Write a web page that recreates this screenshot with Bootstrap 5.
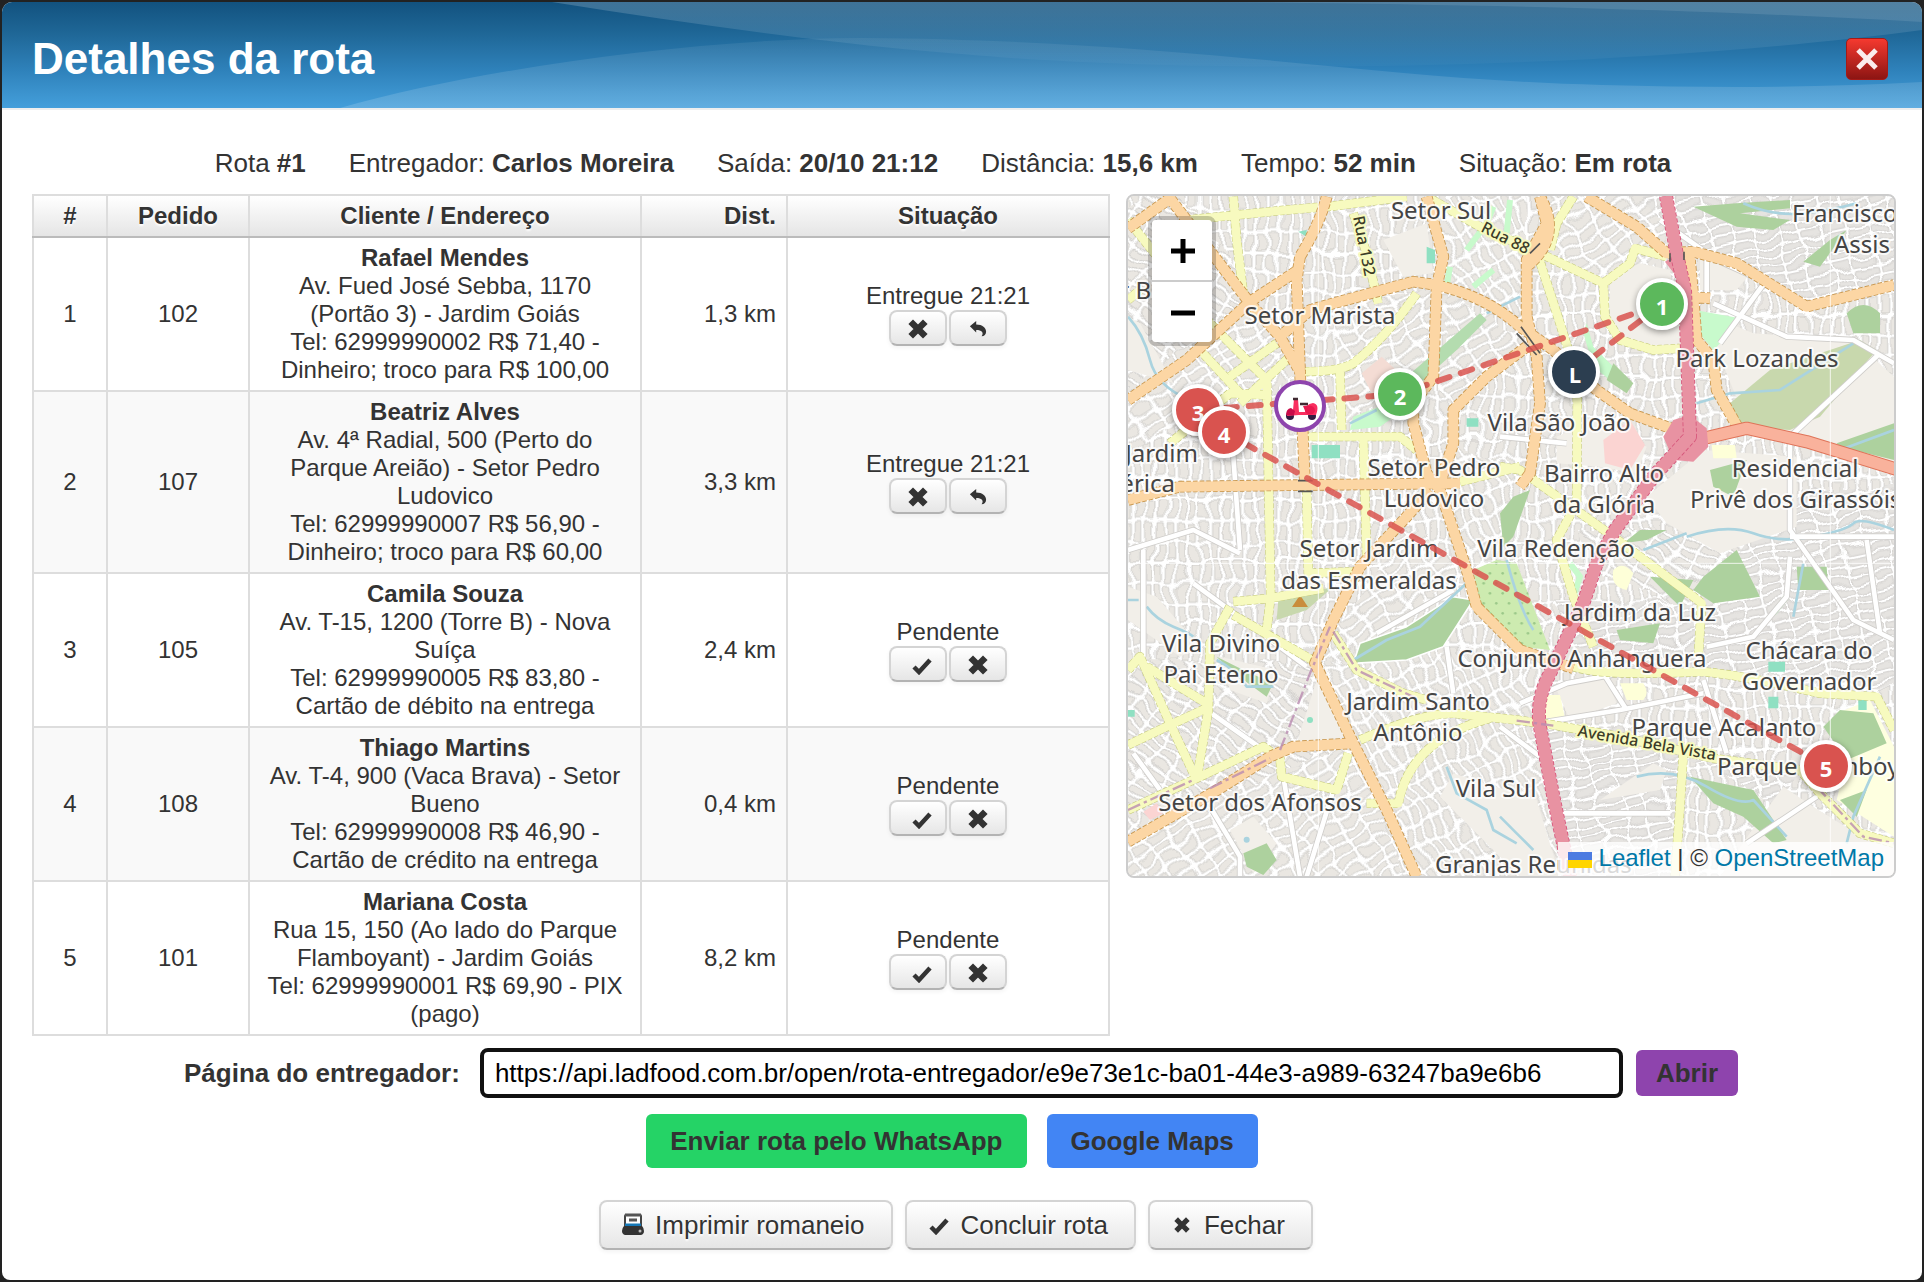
<!DOCTYPE html>
<html lang="pt-BR">
<head>
<meta charset="utf-8">
<meta name="viewport" content="width=device-width, initial-scale=1">
<title>Detalhes da rota</title>
<link href="https://cdn.jsdelivr.net/npm/bootstrap@5.3.0/dist/css/bootstrap.min.css" rel="stylesheet">
<script src="https://cdn.jsdelivr.net/npm/bootstrap@5.3.0/dist/js/bootstrap.bundle.min.js"></script>
<style>
body{background:#222;color:#333;font-family:"Liberation Sans",Arial,sans-serif;font-size:26px;line-height:30px}
.dialog-box{margin:2px;min-height:calc(100vh - 4px);background:#fff;border-radius:10px 10px 8px 8px;overflow:hidden}
.dialog-head{height:108px;padding:8px 34px 0 30px;border-bottom:2px solid #eee;background:linear-gradient(#12527f,#1f6797 30%,#2f82bb 65%,#449fdb)}
.dialog-head h1{font-size:44px;line-height:52px;font-weight:700;color:#fff}
.swoosh{position:absolute;inset:0;width:100%;height:100%}
.close-x{width:42px;height:42px;border:1px solid #a41a17;border-radius:5px;background:linear-gradient(#f5392f,#8c1513)}
.dialog-main{padding:38px 26px 30px 30px}
.info-line{gap:43px;padding-right:42px;margin-bottom:16px}
.split{display:grid;grid-template-columns:7fr 5fr;gap:16px}
.route-table{table-layout:fixed;border-collapse:collapse;font-size:24px;line-height:28px;color:#333;text-align:center}
.route-table>:not(caption)>*>*{padding:6px 10px;border:2px solid #ddd;vertical-align:middle;color:#333;box-shadow:none;background:transparent}
.route-table>thead>tr>th{background:linear-gradient(#fff,#e5e5e5);border-bottom-color:#bbb;text-shadow:0 2px 2px #fff}
.route-table>tbody>tr:nth-child(even){background:#f9f9f9}
.c-num{width:74px}.c-ord{width:142px}.c-dist{width:146px}.c-sit{width:322px}
.soft-btn{border:2px solid #d4d4d4;border-bottom-color:#b3b3b3;border-radius:8px;background:linear-gradient(#fff,#e6e6e6);color:#333;box-shadow:0 2px 4px #0000000d;text-shadow:0 2px 2px #fff}
.soft-btn:hover{background:#e6e6e6}
.pair{gap:2px}
.icon-btn{width:58px;height:36px;padding:0}
.big-btn{height:50px;font-size:26px;line-height:30px;padding:0 26px 0 20px;gap:10px}
.map-box{height:684px;border:2px solid #ccc;border-radius:8px;background:#f2efe9}
.zoom-ctl{top:20px;left:20px;border:4px solid #0003;border-radius:8px;background-clip:padding-box}
.zoom-ctl button{width:60px;height:60px;border:0;background:#fff;padding:0 0 2px 2px}
.zoom-ctl button:first-child{height:62px;border-bottom:2px solid #ccc;border-radius:4px 4px 0 0}
.zoom-ctl button:last-child{border-radius:0 0 4px 4px}
.attrib{right:0;bottom:0;height:34px;padding:0 10px;background:#fffc;font-size:24px;line-height:32px;color:#333}
.attrib a{color:#0078a8;text-decoration:none}
.place{font-family:"Noto Sans","Open Sans",sans-serif;font-size:24px;fill:#444;stroke:#fffc;stroke-width:4px;paint-order:stroke;stroke-linejoin:round;text-anchor:middle}
.at-start{text-anchor:start}.at-end{text-anchor:end}
.street{font-size:16px;font-weight:500;text-anchor:start;fill:#3c3c28;stroke:#f7fabf}
.pin circle{stroke:#fff;stroke-width:4px;filter:drop-shadow(0 2px 3px #0006)}
.pin text{font:700 22px "Open Sans","Noto Sans",sans-serif;fill:#fff;text-anchor:middle}
.link-line{margin-top:12px;padding-right:6px}
.link-line label{margin-right:20px}
.url-field{flex:0 1 1143px;min-width:0;height:50px;border:4px solid #111;border-radius:8px;padding:0 11px;font-size:26px;color:#000;outline:0}
.fill-btn{font-size:26px;line-height:30px;font-weight:700;color:#333;border:0;border-radius:6px}
.open-btn{margin-left:13px;padding:8px 20px;background:#8e44ad}
.send-btn{padding:12px 24px;background:#25d366}
.maps-btn{padding:12px 24px;background:#4285f4}
.send-line{gap:20px;margin-top:16px;padding-right:24px}
.foot-line{gap:12px;margin-top:32px;padding-right:16px}
</style>
</head>
<body>
<svg width="0" height="0" class="position-absolute" aria-hidden="true">
  <symbol id="i-x" viewBox="0 0 20 20"><path d="M5 5l10 10M15 5L5 15" stroke="#333" stroke-width="6.5" stroke-linecap="square"/></symbol>
  <symbol id="i-check" viewBox="0 0 22 20"><path d="M3 12l5 5L19 5" fill="none" stroke="#333" stroke-width="4.5"/></symbol>
  <symbol id="i-undo" viewBox="0 0 20 20"><path d="M1 7l7-6v4c7 0 11 4 11 8 0 3-2 5-5 5 3-4 0-7-6-7v3z" fill="#333"/></symbol>
  <symbol id="i-print" viewBox="0 0 24 24"><path d="M4 12V3q0-1 1-1h14q1 0 1 1v9z" fill="#fff" stroke="#444" stroke-width="2"/><path d="M4 2h16M8 7h8" stroke="#555" stroke-width="3"/><path d="M4 12h16" stroke="#1677b5" stroke-width="3"/><path d="M3 13h18q2 2 2 5t-3 4H4q-3-1-3-4t2-5z" fill="#333"/><circle cx="19" cy="18" r="1.5" fill="#bbb"/></symbol>
</svg>
<div class="dialog-box d-flex flex-column">
  <header class="dialog-head position-relative d-flex align-items-center justify-content-between">
    <svg class="swoosh" viewBox="0 0 1920 106" preserveAspectRatio="none" aria-hidden="true" fill="#fff">
      <linearGradient id="fade" x1="0" y1="0" x2="0" y2="1"><stop stop-color="#fff" stop-opacity=".19"/><stop offset="1" stop-color="#fff" stop-opacity=".02"/></linearGradient>
      <path d="M550 0C700 24 850 44 960 52C1200 74 1620 68 1920 28V0z" fill="url(#fade)"/>
      <path d="M338 106C480 66 700 36 860 36C1180 38 1380 78 1600 83Q1780 88 1920 80V106z" fill="url(#low)"/>
      <linearGradient id="low" x1="0" y1="0" x2="0" y2="1"><stop stop-color="#fff" stop-opacity=".06"/><stop offset="1" stop-color="#fff" stop-opacity=".16"/></linearGradient>
      <path d="M1210 0Q1650 4 1920 20V0z" fill-opacity=".1"/>
    </svg>
    <h1 class="position-relative mb-0">Detalhes da rota</h1>
    <button class="close-x position-relative d-flex align-items-center justify-content-center p-0" aria-label="Fechar janela"><svg width="28" height="28" viewBox="0 0 28 28"><path d="M5 5l18 18M23 5L5 23" stroke="#fbecec" stroke-width="5"/></svg></button>
  </header>
  <main class="dialog-main">
    <div class="info-line d-flex flex-wrap justify-content-center">
      <span>Rota <b>#1</b></span><span>Entregador: <b>Carlos Moreira</b></span><span>Saída: <b>20/10 21:12</b></span><span>Distância: <b>15,6 km</b></span><span>Tempo: <b>52 min</b></span><span>Situação: <b>Em rota</b></span>
    </div>
    <div class="split align-items-start">
      <table class="route-table table mb-0">
        <colgroup><col class="c-num"><col class="c-ord"><col><col class="c-dist"><col class="c-sit"></colgroup>
        <thead><tr><th>#</th><th>Pedido</th><th>Cliente / Endereço</th><th class="text-end">Dist.</th><th>Situação</th></tr></thead>
        <tbody>
          <tr><td>1</td><td>102</td><td><b>Rafael Mendes</b><br>Av. Fued José Sebba, 1170 (Portão 3) - Jardim Goiás<br>Tel: 62999990002 R$ 71,40 - Dinheiro; troco para R$ 100,00</td><td class="text-end">1,3 km</td><td>Entregue 21:21<div class="pair d-flex justify-content-center"><button class="btn soft-btn icon-btn" aria-label="Cancelar"><svg width="20" height="20"><use href="#i-x"/></svg></button><button class="btn soft-btn icon-btn" aria-label="Desfazer"><svg width="18" height="18"><use href="#i-undo"/></svg></button></div></td></tr>
          <tr><td>2</td><td>107</td><td><b>Beatriz Alves</b><br>Av. 4ª Radial, 500 (Perto do Parque Areião) - Setor Pedro Ludovico<br>Tel: 62999990007 R$ 56,90 - Dinheiro; troco para R$ 60,00</td><td class="text-end">3,3 km</td><td>Entregue 21:21<div class="pair d-flex justify-content-center"><button class="btn soft-btn icon-btn" aria-label="Cancelar"><svg width="20" height="20"><use href="#i-x"/></svg></button><button class="btn soft-btn icon-btn" aria-label="Desfazer"><svg width="18" height="18"><use href="#i-undo"/></svg></button></div></td></tr>
          <tr><td>3</td><td>105</td><td><b>Camila Souza</b><br>Av. T-15, 1200 (Torre B) - Nova Suíça<br>Tel: 62999990005 R$ 83,80 - Cartão de débito na entrega</td><td class="text-end">2,4 km</td><td>Pendente<div class="pair d-flex justify-content-center"><button class="btn soft-btn icon-btn ps-2" aria-label="Entregar"><svg width="22" height="20"><use href="#i-check"/></svg></button><button class="btn soft-btn icon-btn" aria-label="Cancelar"><svg width="20" height="20"><use href="#i-x"/></svg></button></div></td></tr>
          <tr><td>4</td><td>108</td><td><b>Thiago Martins</b><br>Av. T-4, 900 (Vaca Brava) - Setor Bueno<br>Tel: 62999990008 R$ 46,90 - Cartão de crédito na entrega</td><td class="text-end">0,4 km</td><td>Pendente<div class="pair d-flex justify-content-center"><button class="btn soft-btn icon-btn ps-2" aria-label="Entregar"><svg width="22" height="20"><use href="#i-check"/></svg></button><button class="btn soft-btn icon-btn" aria-label="Cancelar"><svg width="20" height="20"><use href="#i-x"/></svg></button></div></td></tr>
          <tr><td>5</td><td>101</td><td><b>Mariana Costa</b><br>Rua 15, 150 (Ao lado do Parque Flamboyant) - Jardim Goiás<br>Tel: 62999990001 R$ 69,90 - PIX (pago)</td><td class="text-end">8,2 km</td><td>Pendente<div class="pair d-flex justify-content-center"><button class="btn soft-btn icon-btn ps-2" aria-label="Entregar"><svg width="22" height="20"><use href="#i-check"/></svg></button><button class="btn soft-btn icon-btn" aria-label="Cancelar"><svg width="20" height="20"><use href="#i-x"/></svg></button></div></td></tr>
        </tbody>
      </table>

      <div class="map-box position-relative overflow-hidden">
        <svg class="d-block w-100 h-100" viewBox="1128 196 766 680" preserveAspectRatio="xMidYMid slice" role="img" aria-label="Mapa da rota">
          <defs>
            <filter id="bend" x="-5%" y="-5%" width="110%" height="110%"><feTurbulence type="fractalNoise" baseFrequency=".011" numOctaves="2" seed="7"/><feDisplacementMap in="SourceGraphic" scale="55" xChannelSelector="R" yChannelSelector="G"/></filter>
            <pattern id="g0" width="34" height="62" patternUnits="userSpaceOnUse"><rect width="34" height="62" fill="#fff"/><rect x="6" y="6" width="22" height="50" rx="3" fill="#eae7e2" stroke="#cfcdca" stroke-width="3"/></pattern>
            <pattern id="g1" width="64" height="36" patternUnits="userSpaceOnUse" patternTransform="rotate(-32)"><rect width="64" height="36" fill="#fff"/><rect x="6" y="6" width="52" height="24" rx="3" fill="#eae7e2" stroke="#cfcdca" stroke-width="3"/></pattern>
            <pattern id="g2" width="66" height="34" patternUnits="userSpaceOnUse" patternTransform="rotate(35)"><rect width="66" height="34" fill="#fff"/><rect x="6" y="6" width="54" height="22" rx="3" fill="#eae7e2" stroke="#cfcdca" stroke-width="3"/></pattern>
            <pattern id="g3" width="68" height="30" patternUnits="userSpaceOnUse" patternTransform="rotate(-12)"><rect width="68" height="30" fill="#fff"/><rect x="5" y="5" width="58" height="20" rx="3" fill="#e6e4e1" stroke="#cfcdca" stroke-width="3"/></pattern>
            <pattern id="g4" width="60" height="32" patternUnits="userSpaceOnUse" patternTransform="rotate(62)"><rect width="60" height="32" fill="#fff"/><rect x="6" y="6" width="48" height="20" rx="3" fill="#eae7e2" stroke="#cfcdca" stroke-width="3"/></pattern>
            <pattern id="dots" width="38" height="60" patternUnits="userSpaceOnUse"><circle cx="8" cy="10" r="4" fill="#9cc98a"/><circle cx="27" cy="40" r="4" fill="#9cc98a"/></pattern>
            <g id="roads-y">
              <path d="M340 20L350 150 370 310M180 92L500 60 640 48 860 20M24 90L160 260 270 400 430 560M24 330L60 300M700 70L740 190 775 340M890 310Q800 440 700 520 660 545 550 545M660 545L665 720M440 560L452 1220 440 1320M555 740H840L890 780M730 740L740 1100M560 900L565 1150 700 1145M240 480L360 610M330 560L470 460M360 640L510 500M150 760L330 610 440 615M1020 875L1200 830M920 20L1080 110 1260 190 1450 280 1530 220 1545 175 1640 200M1450 280L1455 380 1500 450 1600 480 1680 475M1255 200L1320 400 1370 560 1372 640 1370 940M1360 20L1310 100 1290 180M1140 830L1200 840 1480 1040 1720 1220 1745 1240 1735 1400M1370 940L1310 1050 1360 1220 1420 1370M1360 1430Q1450 1460 1740 1445 1840 1450 2100 1510L2270 1520 2322 1620M1190 1590L1300 1605 1500 1640 1780 1705 2040 1740 2100 1810 2220 1930 2322 1960M1690 1690L1680 1850 1665 2058M24 1440L60 1400 150 1600 230 1770M80 1430L260 1540M24 1665L150 1605 270 1550M330 1250L270 1360 265 1560 230 1770M340 1235L450 1225 610 1195M340 1275L585 1415M24 1860L230 1765 430 1670 480 1705 485 1760 650 1800 685 1690M640 1330L710 1440 850 1510 920 1530M720 1650Q900 1570 1000 1570L1190 1590M1110 1585Q870 1650 835 1840L740 1840"/>
            </g>
            <g id="roads-o">
              <path d="M24 115L150 25 390 340 480 440 540 545 555 885M620 20Q600 100 540 200L530 270 540 545M24 630L200 510 390 335 535 240M480 440L570 360 640 340 880 275 950 285Q1100 320 1200 410L1300 480 1430 600 1530 670 1680 725M920 20L970 200 950 290 940 560 880 640 880 700 920 850 960 900 1040 1140 1070 1250 1200 1380 1360 1435M1220 470L1100 560 1000 660 1000 760 960 880M24 930L180 890 560 885 1020 880M930 900L860 980 720 1130 640 1290 585 1420 700 1660 800 1860 890 2060M24 1955L300 1795 450 1700 520 1670 700 1660M1260 20L1280 100 1220 210 1220 380 1250 500 1260 640 1230 850 1200 890M1260 20Q1330 140 1220 230M1400 20L1550 110 1640 190 1720 185 1850 220 2060 350 2322 285M1708 190L1720 320 1730 450 1780 510 1790 600 1855 715M1720 322L1770 325"/>
            </g>
            <path id="trunk" d="M1638 18L1670 190 1695 300 1710 740 1600 860 1485 1020 1430 1120 1390 1240 1290 1450Q1250 1520 1258 1600L1300 1820 1350 2060"/>
            <path id="prim" d="M1730 750L1880 715 2060 755 2330 838"/>
          </defs>
          <g transform="translate(1120 190) scale(.33333)" fill="none" stroke-linejoin="round">
            <g filter="url(#bend)">
            <rect x="-60" y="-60" width="2460" height="2200" fill="url(#g0)"/>
            <path d="M-40 90L150 -40 540 540 400 620 -40 640zM-40 1420H600L690 1660 -40 1960zM1380 1020L1900 1020 1700 1250 1440 1150z" fill="url(#g2)"/>
            <path d="M-40 640L390 340 540 545 440 600 -40 800zM640 340L950 290 940 560 660 700zM980 300L1220 460 1000 660 960 600zM860 1000L1040 1140 700 1400 600 1400zM-40 1950L700 1660 890 2140H-40zM1280 -40H1640V200L1450 280 1260 180z" fill="url(#g1)"/>
            <path d="M1720 185L2060 350 2400 290V-40H1500zM2060 900H2400V1500L1740 1440 1750 1230 1900 1020zM1260 1620H1670V2140H1340zM1690 1700L2040 1740 1960 1850 1800 1750zM1300 1240H1730V1440H1400z" fill="url(#g3)"/>
            <path d="M610 1410L1200 1370 1250 1600 1340 2140H890zM980 -40H1220V430L970 280zM1000 760L1240 850 1180 1000 1050 1140 960 900z" fill="url(#g4)"/>
            </g>
            <g fill="#f2efe9">
              <path d="M1470 260L1560 220 1650 240 1690 470 1560 470 1470 420zM1730 360L1900 430 2200 450 2322 560 2322 830 1880 700 1800 500zM1750 780L2030 800V1010L1800 1090 1640 1000 1580 920zM790 150L920 100 940 250 850 260zM590 1470L690 1640 530 1660zM1310 1500L1450 1450 1490 1540 1350 1590zM1000 1750L1250 1830 1320 2060H1200L960 1820zM1440 1830L1600 1720 1640 1740 1620 1800zM330 1920L400 1880 470 1960 400 2050zM24 1190L110 1220 240 1370 180 1400 24 1290zM24 380L60 400 160 580 24 540zM300 1400L470 1440 440 1540 330 1500z"/>
              <path d="M1740 200L1900 240 1850 300 1740 300z"/>
            </g>
            <path d="M1910 1900L1990 1790 2080 1850 2240 1950 2322 1960V2060H1800z" fill="#f2efe9"/>
            <path d="M2150 1570L2250 1530 2322 1670V1940L2150 1830 2180 1700z" fill="#feffe0"/>
            <path d="M1310 740L1420 690 1580 770 1550 850 1440 830 1310 820z" fill="#f2efe9"/>
            <path d="M1450 750L1530 690 1575 765 1530 840 1455 820z" fill="#fbd4d2"/>
            <path d="M725 550L785 500 850 560 765 630z" fill="#f4dcd4"/>
            <path d="M70 1865L110 1840 130 1870 90 1890z" fill="#fbd4d2"/>
            <path d="M1480 1140q30-30 60 10l-20 50q-50-10-40-60zM1500 1480h70q20 30 0 50h-50zM1275 1515h45l15 70h-60zM1775 765h70l5 40h-70z" fill="#feffd8"/>
            <path d="M1060 1140L1130 1110 1190 1120 1290 1380 1200 1370 1090 1290z" fill="#cdebb0"/><path d="M1060 1140L1130 1110 1190 1120 1290 1380 1200 1370 1090 1290z" fill="url(#dots)"/>
            <path d="M700 1420L720 1360 860 1310 1000 1220 1060 1230 970 1370 860 1410z" fill="#add19e" stroke="#fff" stroke-width="5"/>
            <path d="M470 1290L475 1230 640 1190 560 1260z" fill="#c8d8ad"/>
            <path d="M690 720L700 680 830 630 850 660 780 710z" fill="#c8facc"/>
            <path d="M1725 360L1860 385 1820 440 1780 480 1730 420zM1400 400l20 70 60 60-10 40-50-40-30-100z" fill="#c8facc"/>
            <path d="M860 560L1080 370 1100 390 1010 480 900 580z" fill="#b4dcaf"/>
            <path d="M1460 570L1480 520 1540 580 1520 610zM1720 50L1850 40 2010 30V55L1860 70 2010 90 1960 120 1850 110zM2050 215L2130 150 2180 120 2100 230zM1750 1160L1850 1080 1920 1220 1780 1240 1720 1200zM1590 1160L1720 1170 1680 1250zM1510 1060L1560 1020H1640L1580 1050zM1490 1320L1620 1300 1600 1360 1500 1350zM1770 840L1880 810 1840 920 1780 890zM2160 1560L2260 1570 2300 1660 2180 1710 2110 1610zM1710 1760L1900 1800 2000 1950 1960 1960 1870 1880 1780 1840zM2160 1830L2240 1800 2210 1880zM370 1990L440 1960 470 2010 430 2055 380 2030zM2030 1130h90l5 70h-90zM2150 760L2322 700V810L2160 770zM2180 370q50-50 100 0v60h-80zM1140 970L1180 920 1230 900 1180 1040 1150 1070zM290 1400L370 1440 460 1480 440 1520 330 1440z" fill="#add19e"/>
            <path d="M1830 640L1950 540 2220 450 2270 480 2100 680 2010 720 1850 710z" fill="#c8d8ad"/>
            <g fill="#8fe0c2"><path d="M575 765h85v40h-85zM920 170l25 10v40h-25zM535 125l25-5v20zM1040 685h35v25h-35zM1945 1415h50v30h-50zM1945 1520h30v35h-30zM2215 1530h25v30h-25zM24 1560h20v20h-20z"/><circle cx="570" cy="1590" r="9"/></g>
            <path d="M1040 180l60-80 20-50M1060 290l60-50M1170 30l-10 100M990 230l-10 60M1350 1120l30 40-20 60M1960 1270l40-50" stroke="#c8facc" stroke-width="18"/>
            <g stroke="#aad3df" stroke-width="8"><path d="M24 380Q70 430 90 510T210 630M80 1250Q110 1290 160 1310T220 1340M24 1230H56M1060 1160L900 1310 800 1350 700 1410M690 700l80-40M1200 320L1100 370M1870 40Q1960 80 2050 70T2210 40M1730 640L1830 610 1980 600 2200 460M1700 1040Q1820 1000 1900 1030T2080 1040 2200 1000 2322 1020M1160 1110Q1200 1260 1240 1320M1550 1760Q1660 1730 1760 1790T1900 1830L2000 1940M2280 1700L2200 1880 2180 1960M2050 1120L2020 1280M980 1730L1010 1810 1100 1860 1120 1920 1190 1960M1140 1880L1190 1930 1240 1980M290 1410Q350 1440 380 1490L460 1490M2160 780L2322 720M1570 1080L1700 1030"/></g>
            <path d="M540 1215l24 36h-48z" fill="#c98d3c"/><circle cx="380" cy="1949" r="9" fill="#aad3df"/>
            <g stroke="#cfcdca" stroke-width="19"><path id="w" d="M1620 90L1790 210 1900 260M1760 210V310M1780 340L2000 440 2200 450 2322 520M2280 490L2010 740V1020L2200 1290 2322 1350M2010 1040H2322M1140 740L1340 760M70 1080V1400M24 1080L220 1020 360 1090M330 660L360 1080M220 1180L560 1430M260 1560L430 1680M40 1690L120 1800M270 1850L360 2000V2060M490 1760L540 2060M640 1800L560 2060M1200 1540L1340 1480 1500 1450M1250 1600L1500 1560 1750 1510M1750 1470L1820 1690M1000 1200L770 1330M980 1370L1000 1510M1140 1610L1260 1700M1880 1960L2150 1780M1320 1870H1650M1450 1450L1520 1560M2240 1050L2280 1330M1940 270L1800 460M2010 1100L2000 1220 1900 1340 1760 1370"/></g>
            <use href="#w" stroke="#fff" stroke-width="14"/>
            <use href="#roads-y" stroke="#c3c878" stroke-width="28" stroke-dasharray="14 6"/><use href="#roads-y" stroke="#f7fabf" stroke-width="25"/>
            <use href="#roads-o" stroke="#c8974e" stroke-width="35" stroke-dasharray="14 6"/><use href="#roads-o" stroke="#fcd6a4" stroke-width="30"/>
            <use href="#prim" stroke="#df7358" stroke-width="40"/><use href="#prim" stroke="#f9b29c" stroke-width="34"/>
            <path d="M1660 690L1710 675 1760 715 1765 770 1720 815 1660 810 1630 740zM1635 215L1660 200 1690 260H1670z" fill="#e892a2"/>
            <use href="#trunk" stroke="#d6567b" stroke-width="42" stroke-dasharray="12 6"/><use href="#trunk" stroke="#e892a2" stroke-width="37"/>
            <path d="M1190 1592L1300 1607M2090 1790L2230 1940 2322 1960M480 1680L500 1630 570 1450 630 1310M640 1325L710 1440 900 1530M24 1860L220 1770M270 1795L450 1705" stroke="#b98bb0" stroke-width="7" stroke-dasharray="40 12 10 12" opacity=".8"/>
            <path d="M1203 410L1260 490M1190 430L1250 495M1230 190l30-30M1650 190v25M1692 185v25M534 872h44M534 904h44" stroke="#555" stroke-width="5"/>
            <path d="M595 18V2060M2131 18V2060M24 1120H2322" stroke="#fffc" stroke-width="3"/>
          </g>
          <g class="place">
            <text x="1441" y="219">Setor Sul</text><text x="1320" y="324">Setor Marista</text><text class="at-end" x="1151" y="299">r B</text>
            <text class="at-end" x="1198" y="462">Jardim</text><text class="at-end" x="1175" y="492">América</text>
            <text x="1434" y="476">Setor Pedro</text><text x="1434" y="507">Ludovico</text><text x="1559" y="431">Vila São João</text>
            <text x="1757" y="367">Park Lozandes</text><text x="1604" y="482">Bairro Alto</text><text x="1604" y="513">da Glória</text>
            <text class="at-start" x="1792" y="222">Francisco</text><text x="1862" y="253">Assis</text>
            <text x="1795" y="477">Residencial</text><text class="at-start" x="1690" y="508">Privê dos Girassóis</text>
            <text x="1369" y="557">Setor Jardim</text><text x="1369" y="589">das Esmeraldas</text><text x="1556" y="557">Vila Redenção</text>
            <text x="1221" y="652">Vila Divino</text><text x="1221" y="683">Pai Eterno</text><text x="1418" y="710">Jardim Santo</text><text x="1418" y="741">Antônio</text>
            <text x="1582" y="667">Conjunto Anhanguera</text><text x="1640" y="621">Jardim da Luz</text><text x="1809" y="659">Chácara do</text><text x="1809" y="690">Governador</text>
            <text x="1724" y="736">Parque Acalanto</text><text class="at-start" x="1717" y="775">Parque Flamboyant</text>
            <text x="1496" y="797">Vila Sul</text><text x="1260" y="811">Setor dos Afonsos</text><text class="at-start" x="1435" y="873">Granjas Reunidas</text>
            <text class="street" transform="translate(1353 217) rotate(79)">Rua 132</text>
            <text class="street" transform="translate(1480 231) rotate(27)">Rua 88</text>
            <text class="street" transform="translate(1577 736) rotate(10)">Avenida Bela Vista</text>
          </g>
          <path d="M1574 372L1662 304 1400 394 1198 410 1224 432 1826 766" fill="none" stroke="#d9534f" stroke-opacity=".85" stroke-width="6" stroke-linecap="round" stroke-dasharray="12 12"/>
          <g class="pin">
            <circle cx="1662" cy="304" r="24" fill="#5cb85c"/><text x="1662" y="315">1</text>
            <circle cx="1574" cy="372" r="24" fill="#2c3e50"/><text x="1575" y="383">L</text>
            <circle cx="1198" cy="410" r="24" fill="#d9534f"/><text x="1198" y="421">3</text>
            <circle cx="1400" cy="394" r="24" fill="#5cb85c"/><text x="1400" y="405">2</text>
            <circle cx="1224" cy="432" r="24" fill="#d9534f"/><text x="1224" y="443">4</text>
            <circle cx="1826" cy="766" r="24" fill="#d9534f"/><text x="1826" y="777">5</text>
          </g>
          <circle cx="1300" cy="406" r="24" fill="#fff" stroke="#8e44ad" stroke-width="4"/>
          <g><circle cx="1290" cy="416" r="4" fill="#321b41"/><circle cx="1312" cy="416" r="4" fill="#321b41"/><path d="M1294 399h4l1 13h6q0-8 8-9 7 1 3 12h-17l-12 1q0-5 6-6z" fill="#f92f60"/><path d="M1286 415q0-6 5-7l4 3-1 4z" fill="#ca0b4a"/><path d="M1303 406q12-2 12 5-3 6-9 2z" fill="#e8194f"/><path d="M1293 399h5M1300 404h8" stroke="#402a32" stroke-width="2.5"/></g>
        </svg>
        <div class="zoom-ctl position-absolute d-flex flex-column">
          <button aria-label="Aproximar"><svg width="26" height="26"><path d="M13 1v24M1 13h24" stroke="#000" stroke-width="5"/></svg></button>
          <button aria-label="Afastar"><svg width="26" height="26"><path d="M1 13h24" stroke="#000" stroke-width="5"/></svg></button>
        </div>
        <div class="attrib position-absolute text-nowrap"><a href="#leaflet"><svg width="24" height="16" aria-hidden="true"><path fill="#4c7be1" d="M0 0h24v8H0z"/><path fill="#ffd500" d="M0 8h24v8H0z"/></svg> Leaflet</a> | © <a href="#osm">OpenStreetMap</a></div>
      </div>
    </div>

    <div class="link-line d-flex justify-content-center align-items-center">
      <label for="driver-url" class="fw-bold text-nowrap">Página do entregador:</label>
      <input id="driver-url" class="url-field" type="text" value="https://api.ladfood.com.br/open/rota-entregador/e9e73e1c-ba01-44e3-a989-63247ba9e6b6" readonly>
      <button class="btn fill-btn open-btn">Abrir</button>
    </div>
    <div class="send-line d-flex justify-content-center">
      <button class="btn fill-btn send-btn">Enviar rota pelo WhatsApp</button>
      <button class="btn fill-btn maps-btn">Google Maps</button>
    </div>
    <div class="foot-line d-flex justify-content-center">
      <button class="btn soft-btn big-btn d-flex align-items-center"><svg width="24" height="24"><use href="#i-print"/></svg> Imprimir romaneio</button>
      <button class="btn soft-btn big-btn d-flex align-items-center"><svg width="24" height="20"><use href="#i-check"/></svg> Concluir rota</button>
      <button class="btn soft-btn big-btn d-flex align-items-center"><svg width="24" height="16"><use href="#i-x"/></svg> Fechar</button>
    </div>
  </main>
</div>
</body>
</html>
